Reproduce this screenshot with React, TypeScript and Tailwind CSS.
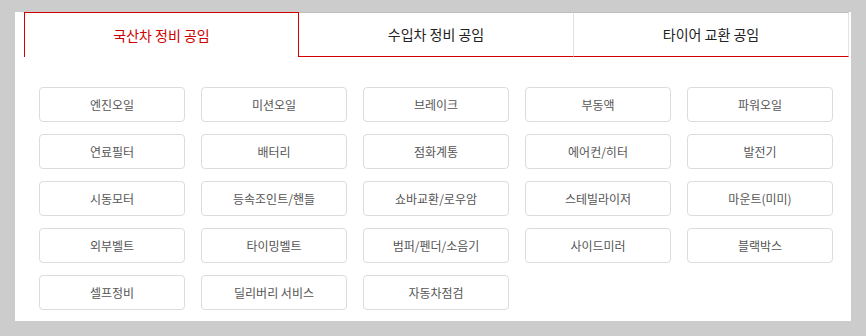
const tabs = ["국산차 정비 공임", "수입차 정비 공임", "타이어 교환 공임"];

const items = [
  "엔진오일",
  "미션오일",
  "브레이크",
  "부동액",
  "파워오일",
  "연료필터",
  "배터리",
  "점화계통",
  "에어컨/히터",
  "발전기",
  "시동모터",
  "등속조인트/핸들",
  "쇼바교환/로우암",
  "스테빌라이저",
  "마운트(미미)",
  "외부벨트",
  "타이밍벨트",
  "범퍼/펜더/소음기",
  "사이드미러",
  "블랙박스",
  "셀프정비",
  "딜리버리 서비스",
  "자동차점검",
];

export default function App() {
  const active = 0;
  return (
    <div
      className="min-h-[336px] w-[866px] bg-[#cccccc] pt-[15px] pb-[15px]"
      style={{ fontFamily: '"Noto Sans CJK KR", "Noto Sans", sans-serif' }}
    >
      <div className="ml-[15px] w-[836px] bg-white pl-[9px] pb-[11px]">
        {/* 탭 */}
        <div className="-mt-[3px] flex w-[825px]">
          {tabs.map((t, i) =>
            i === active ? (
              <div
                key={t}
                className="flex h-[45px] w-[275px] items-center justify-center border border-b-0 border-[#d40000] bg-white text-[14px] text-[#cc0000]"
              >
                {t}
              </div>
            ) : (
              <div
                key={t}
                className="flex h-[45px] w-[275px] items-center justify-center border-t border-r border-b border-t-[#bdbdbd] border-r-[#e2e2e2] border-b-[#d40000] bg-white text-[14px] text-[#222]"
              >
                {t}
              </div>
            )
          )}
        </div>

        {/* 항목 */}
        <div className="mt-[30px] ml-[15px] grid w-[794px] grid-cols-5 gap-x-4 gap-y-3">
          {items.map((item) => (
            <button
              key={item}
              className="flex h-[35px] items-center justify-center rounded-[4px] border border-[#dcdcdc] bg-white text-[12px] text-[#555]"
            >
              {item}
            </button>
          ))}
        </div>
      </div>
    </div>
  );
}
